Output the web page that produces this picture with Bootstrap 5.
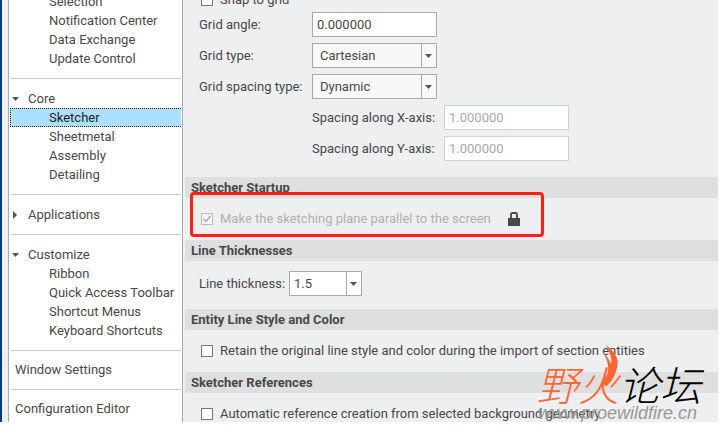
<!DOCTYPE html>
<html lang="en">
<head>
<meta charset="utf-8">
<meta name="viewport" content="width=device-width, initial-scale=1">
<title>Options - Sketcher</title>
<link href="https://cdn.jsdelivr.net/npm/bootstrap@5.3.0/dist/css/bootstrap.min.css" rel="stylesheet">
<style>
  body { font: 13px/19px Roboto, "Noto Sans", sans-serif; color: #484848; background: #fff; }
  .shell { height: 100vh; padding: 0 4px 7px 0; }
  .dialog { background: #eeeff1; border-left: 2px solid #063c78; }
  .tree { flex: 0 0 175px; margin-left: 6px; padding: 0 1px; background: #fff; border: solid #a9abaf; border-width: 0 1px; white-space: nowrap; }
  .tree-scroll { margin-top: -8px; }
  .tree a { display: block; color: inherit; text-decoration: none; }
  .tree hr { margin: 10px 0 10px 1px; border-top: 1px solid #c9c9c9; opacity: 1; }
  .tree .leaf { padding-left: 38px; border: 1px dotted transparent; border-right: 0; line-height: 17px; }
  .tree .leaf.current { background: #ade0ff; border-color: #222; color: #222; }
  .tree .branch { display: flex; align-items: center; padding-left: 2px; }
  .branch svg { width: 8px; height: 8px; margin-right: 8px; fill: #555; }
  .tree .top-leaf { padding-left: 5px; line-height: 18px; }
  .pane { padding-left: 2px; }
  .pane h2 { margin: 0; padding-left: 6px; font-size: 13px; font-weight: 700; line-height: 21px; background: #dfdfdf; }
  .fields { margin-top: -10px; padding: 0 0 16px 14px; }
  .gap-form { gap: 6px; padding-top: 3px; }
  .fields .form-label-cell { flex: 0 0 113px; }
  .fields .sub-row { padding-left: 113px; }
  .fields .sub-row .form-label-cell { flex-basis: 132px; }
  .box { width: 125px; height: 25px; padding: 0 4px; font: inherit; color: inherit; border: 1px solid #a8aaad; border-radius: 0; background: #fff; }
  .box:disabled { color: #a9a9a9; border-color: #cdd0d4; opacity: 1; }
  select.box { appearance: none; padding-left: 7px; background: url("data:image/svg+xml,%3Csvg xmlns='http://www.w3.org/2000/svg' width='15' height='23'%3E%3Cpath d='M0 0h1v23H0z' fill='%23a8aaad'/%3E%3Cpath d='M4 10h7L7.500 14z' fill='%23555'/%3E%3C/svg%3E") right center no-repeat #f8f8f8; }
  select.thickness { width: 73px; padding-left: 4px; background-color: #fff; }
  .thick-row { height: 48px; padding: 0 0 3px 14px; }
  .thick-row label { flex: 0 0 90px; }
  .tick-row { height: 42px; padding: 0 0 1px 16px; }
  .tick { appearance: none; flex: none; width: 12px; height: 12px; margin: 0 7px 0 0; border: 1px solid #777; background: #fff; }
  .tick:disabled { border-color: #bbb; background: #f4f4f4 url("data:image/svg+xml,%3Csvg xmlns='http://www.w3.org/2000/svg' width='10' height='10'%3E%3Cpath d='M1.500 5L4 7.500L8.500 2' fill='none' stroke='%23aaa' stroke-width='1.500'/%3E%3C/svg%3E"); }
  .tick:disabled + label { color: #b0b0b0; }
  .snap { height: 19px; padding-left: 2px; }
  .locked-label { width: 277px; }
  .highlight { position: absolute; left: 5px; top: -6px; width: 354px; height: 45px; border: 3px solid #ff2015; border-radius: 4px; pointer-events: none; }
  .lock { margin-left: 11px; }
  .watermark { position: absolute; right: 16px; bottom: 0; width: 165px; height: 78px; white-space: nowrap; pointer-events: none; }
  .watermark .brand { position: absolute; left: 0; top: 15px; font: italic 300 41px/48px "Noto Sans CJK SC", sans-serif; color: #000; }
  .watermark .fire { color: #ff6633; }
  .watermark .site { position: absolute; left: 1px; top: 59px; font: italic 18px/20px "Liberation Sans", sans-serif; color: #999; }
  .watermark svg { position: absolute; left: 63px; top: 0; }
</style>
<script src="https://cdn.jsdelivr.net/npm/bootstrap@5.3.0/dist/js/bootstrap.bundle.min.js"></script>
</head>
<body>
<div class="shell">
<div class="dialog d-flex h-100 overflow-hidden position-relative">
  <nav class="tree overflow-hidden" aria-label="Option categories">
    <div class="tree-scroll">
      <a class="leaf" href="#">Selection</a>
      <a class="leaf" href="#">Notification Center</a>
      <a class="leaf" href="#">Data Exchange</a>
      <a class="leaf" href="#">Update Control</a>
      <hr>
      <a class="branch" href="#"><svg viewBox="0 0 8 8"><path d="M0 2h7L3.500 6z"/></svg>Core</a>
      <a class="leaf current" href="#" aria-current="page">Sketcher</a>
      <a class="leaf" href="#">Sheetmetal</a>
      <a class="leaf" href="#">Assembly</a>
      <a class="leaf" href="#">Detailing</a>
      <hr>
      <a class="branch" href="#"><svg viewBox="0 0 8 8"><path d="M1 0v8L5 4z"/></svg>Applications</a>
      <hr>
      <a class="branch" href="#"><svg viewBox="0 0 8 8"><path d="M0 2h7L3.500 6z"/></svg>Customize</a>
      <a class="leaf" href="#">Ribbon</a>
      <a class="leaf" href="#">Quick Access Toolbar</a>
      <a class="leaf" href="#">Shortcut Menus</a>
      <a class="leaf" href="#">Keyboard Shortcuts</a>
      <hr>
      <a class="top-leaf" href="#">Window Settings</a>
      <hr>
      <a class="top-leaf" href="#">Configuration Editor</a>
    </div>
  </nav>
  <main class="pane flex-grow-1 overflow-hidden">
    <div class="fields d-flex flex-column">
      <div class="snap d-flex align-items-center"><input class="tick" type="checkbox" id="snap"><label for="snap">Snap to grid</label></div>
      <div class="gap-form d-flex flex-column">
        <div class="d-flex align-items-center"><label class="form-label-cell" for="angle">Grid angle:</label><input class="box" id="angle" value="0.000000"></div>
        <div class="d-flex align-items-center"><label class="form-label-cell" for="gtype">Grid type:</label><select class="box" id="gtype"><option>Cartesian</option></select></div>
        <div class="d-flex align-items-center"><label class="form-label-cell" for="stype">Grid spacing type:</label><select class="box" id="stype"><option>Dynamic</option></select></div>
        <div class="d-flex align-items-center sub-row"><label class="form-label-cell" for="sx">Spacing along X-axis:</label><input class="box" id="sx" value="1.000000" disabled></div>
        <div class="d-flex align-items-center sub-row"><label class="form-label-cell" for="sy">Spacing along Y-axis:</label><input class="box" id="sy" value="1.000000" disabled></div>
      </div>
    </div>
    <h2>Sketcher Startup</h2>
    <div class="tick-row d-flex align-items-center position-relative">
      <input class="tick" type="checkbox" id="parallel" checked disabled><label class="locked-label" for="parallel">Make the sketching plane parallel to the screen</label>
      <svg class="lock" width="12" height="14" viewBox="0 0 12 14" aria-hidden="true"><path d="M0 6h12v8H0z" fill="#484848"/><path d="M3 7V2.500Q3 1 4.500 1h3Q9 1 9 2.500V7" fill="none" stroke="#484848" stroke-width="1.800"/></svg>
      <div class="highlight"></div>
    </div>
    <h2>Line Thicknesses</h2>
    <div class="thick-row d-flex align-items-center"><label for="thick">Line thickness:</label><select class="box thickness" id="thick"><option>1.5</option></select></div>
    <h2>Entity Line Style and Color</h2>
    <div class="tick-row d-flex align-items-center"><input class="tick" type="checkbox" id="retain"><label for="retain">Retain the original line style and color during the import of section entities</label></div>
    <h2>Sketcher References</h2>
    <div class="tick-row d-flex align-items-center"><input class="tick" type="checkbox" id="auto"><label for="auto">Automatic reference creation from selected background geometry</label></div>
  </main>
  <div class="watermark">
    <span class="brand" lang="zh-CN"><span class="fire">野火</span>论坛</span>
    <span class="site">www.proewildfire.cn</span>
    <svg width="20" height="43" viewBox="0 0 20 43" aria-hidden="true"><path fill="#ff6633" d="M6 1C14 7 19 14 17.500 21C16 31 11 38 7 42C4 42 2 40 1.500 38C7 33 10 27 7 17C6 13 4 11 3.500 9C7 12 9 15 11 20C12.500 14 9 6 6 1Z"/></svg>
  </div>
</div>
</div>
</body>
</html>
